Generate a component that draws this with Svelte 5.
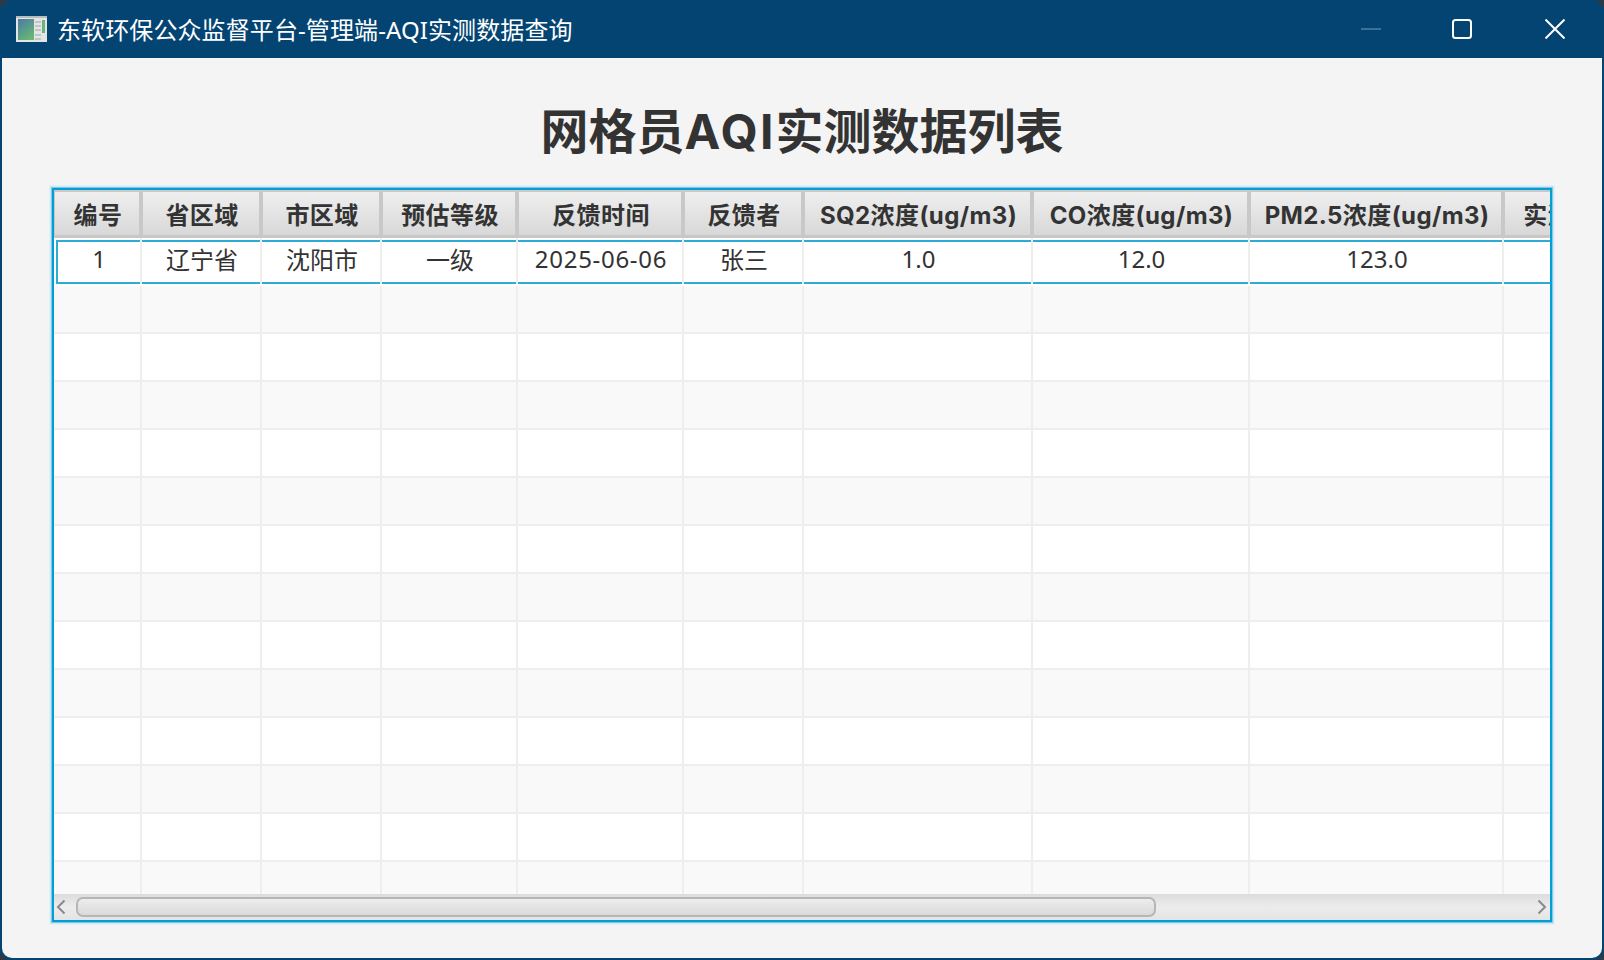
<script lang="ts">
  const columns = [
    { title: '编号', width: 88, value: '1' },
    { title: '省区域', width: 120, value: '辽宁省' },
    { title: '市区域', width: 120, value: '沈阳市' },
    { title: '预估等级', width: 136, value: '一级' },
    { title: '反馈时间', width: 166, value: '2025-06-06', wide: true },
    { title: '反馈者', width: 120, value: '张三' },
    { title: 'SQ2浓度(ug/m3)', width: 229, value: '1.0' },
    { title: 'CO浓度(ug/m3)', width: 217, value: '12.0' },
    { title: 'PM2.5浓度(ug/m3)', width: 254, value: '123.0' },
    { title: '实测等级', width: 136, value: '' }
  ];
  const rows = Array.from({ length: 14 }, (_, i) => i);
</script>

<div class="window">
  <header class="titlebar">
    <svg class="app-icon" width="31" height="26" viewBox="0 0 31 26">
      <defs>
        <linearGradient id="pane" x1="0" y1="0" x2="0.6" y2="1">
          <stop offset="0" stop-color="#4a7aa6" />
          <stop offset="1" stop-color="#67b673" />
        </linearGradient>
      </defs>
      <rect width="31" height="26" fill="#e4e6e6" />
      <rect x="0" y="0" width="31" height="2" fill="#b9bdbf" />
      <rect x="2" y="3" width="16" height="21" fill="url(#pane)" />
      <rect x="19" y="5" width="6" height="2" fill="#c2c5c6" />
      <rect x="19" y="9" width="6" height="2" fill="#c2c5c6" />
      <rect x="19" y="13" width="6" height="2" fill="#c2c5c6" />
      <rect x="19" y="18" width="6" height="2" fill="#c2c5c6" />
      <rect x="19" y="22" width="6" height="2" fill="#c2c5c6" />
      <rect x="26" y="4" width="3" height="13" fill="#6bb37e" />
    </svg>
    <span class="window-title">东软环保公众监督平台-管理端-AQI实测数据查询</span>
    <div class="controls">
      <svg class="ctl min" width="20" height="20" viewBox="0 0 20 20"><path d="M0 10h20" /></svg>
      <svg class="ctl" width="20" height="20" viewBox="0 0 20 20"><rect x="1" y="1" width="18" height="18" rx="2.5" /></svg>
      <svg class="ctl" width="20" height="20" viewBox="0 0 20 20"><path d="M0.5 0.5l19 19M19.5 0.5l-19 19" /></svg>
    </div>
  </header>

  <main class="content">
    <h1>网格员<span class="latin">AQI</span>实测数据列表</h1>
    <section class="table">
      <div class="thead">
        {#each columns as col}
          <div class="th" style="width: {col.width}px"><span>{col.title}</span></div>
        {/each}
      </div>
      <div class="tbody">
        {#each rows as r}
          <div class="tr" class:odd={r % 2 === 1} class:selected={r === 0}>
            {#each columns as col, c}
              <div class="td" style="width: {col.width}px">
                <div class="cell" class:first={c === 0} class:wide={col.wide}><span>{r === 0 ? col.value : ''}</span></div>
              </div>
            {/each}
          </div>
        {/each}
      </div>
      <div class="hscroll">
        <svg class="arrow left" width="10" height="16" viewBox="0 0 10 16"><path d="M8.5 1.5L2 8l6.5 6.5" /></svg>
        <div class="track"><div class="thumb"></div></div>
        <svg class="arrow" width="10" height="16" viewBox="0 0 10 16"><path d="M1.5 1.5L8 8l-6.5 6.5" /></svg>
      </div>
    </section>
  </main>
</div>

<style>
  :global(body) {
    background: #2d3a44;
    overflow: hidden;
  }

  .window {
    width: 1604px;
    height: 960px;
    box-sizing: border-box;
    display: flex;
    flex-direction: column;
    background: #044473;
    border-radius: 12px;
    padding: 0 2px 2px;
    overflow: hidden;
    font-family: Inter, "Noto Sans CJK SC", sans-serif;
    color: #333;
  }

  .titlebar {
    height: 58px;
    flex: none;
    display: flex;
    align-items: center;
    padding: 0 37px 0 14px;
    color: #fff;
  }

  .app-icon {
    flex: none;
    margin-right: 10px;
  }

  .window-title {
    font-family: "Noto Sans", "Noto Sans CJK SC", sans-serif;
    font-size: 24px;
    letter-spacing: 0.1px;
    white-space: nowrap;
    position: relative;
    top: -1px;
  }

  .controls {
    margin-left: auto;
    display: flex;
    gap: 73px;
  }

  .ctl {
    fill: none;
    stroke: #fff;
    stroke-width: 2;
    display: block;
  }

  .ctl.min {
    stroke: #3d7099;
    margin-right: -2px;
  }

  .content {
    flex: 1;
    min-height: 0;
    display: flex;
    flex-direction: column;
    background: #f4f4f4;
    border-radius: 0 0 10px 10px;
    padding: 0 50px 36px;
  }

  h1 {
    margin: 0;
    height: 130px;
    flex: none;
    font-size: 48px;
    font-weight: 700;
    line-height: 148px;
    text-align: center;
    white-space: nowrap;
    overflow: hidden;
  }

  .latin {
    letter-spacing: 2.2px;
  }

  .table {
    flex: 1;
    min-height: 0;
    display: flex;
    flex-direction: column;
    border: 2px solid #039ed3;
    box-shadow: 0 0 0 1px #7ccbe8, 0 0 0 2px #cfe8f3, 0 0 0 3px #e6f0f4;
    background: #fff;
    overflow: hidden;
  }

  .thead {
    flex: none;
    height: 48px;
    display: flex;
    background: #c8c8c8;
    padding-bottom: 2px;
    box-sizing: border-box;
  }

  .th {
    flex: none;
    box-sizing: border-box;
    padding: 2px 3px 1px 1px;
    font-size: 24px;
    font-weight: 700;
    letter-spacing: 0.4px;
    white-space: nowrap;
    overflow: hidden;
  }

  .th span {
    height: 100%;
    box-sizing: border-box;
    display: flex;
    align-items: center;
    justify-content: center;
    padding: 0 0 1px 2px;
    background: linear-gradient(#efefef, #d8d8d8);
  }

  .tbody {
    flex: 1;
    min-height: 0;
    overflow: hidden;
  }

  .tr {
    display: flex;
    height: 48px;
    box-sizing: border-box;
    background: #fff;
    border-bottom: 2px solid #eee;
  }

  .tr.odd {
    background: #f9f9f9;
  }

  .td {
    flex: none;
    box-sizing: border-box;
    display: flex;
    border-right: 2px solid #eee;
    font-family: "Noto Sans", "Noto Sans CJK SC", sans-serif;
    font-size: 24px;
    white-space: nowrap;
  }

  .cell {
    flex: 1;
    display: flex;
    align-items: center;
    justify-content: center;
    padding: 0 0 7px 2px;
  }

  .cell.first {
    padding-left: 0;
  }

  .cell.wide {
    letter-spacing: 0.7px;
  }

  .selected {
    border-bottom-color: #fff;
  }

  .selected .cell {
    margin: 2px 0 0;
    border-top: 2px solid #2cabd7;
    border-bottom: 2px solid #2cabd7;
  }

  .selected .cell.first {
    margin-left: 2px;
    border-left: 2px solid #2cabd7;
  }

  .hscroll {
    flex: none;
    height: 26px;
    display: flex;
    align-items: center;
    gap: 8px;
    padding: 0 3px 0 2px;
    background: linear-gradient(#dcdcdc, #ececec 50%, #e4e4e4);
  }

  .arrow {
    flex: none;
    fill: none;
    stroke: #8a8a8a;
    stroke-width: 2;
  }

  .arrow.left {
    margin-right: 2px;
  }

  .track {
    flex: 1;
    height: 20px;
  }

  .thumb {
    width: 1080px;
    height: 100%;
    box-sizing: border-box;
    border: 2px solid #b6b6b6;
    border-radius: 7px;
    background: linear-gradient(#ededed, #dadada);
  }
</style>
